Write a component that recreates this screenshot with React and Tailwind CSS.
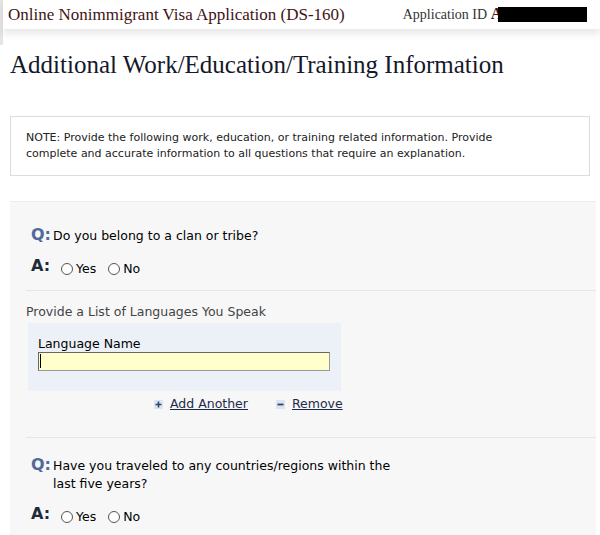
import React from 'react';

function Radio({ label }) {
    return (
        <span className="flex items-center mr-[12px]">
            <span className="w-[12px] h-[12px] rounded-full border border-[#555] bg-white mr-[3px]"></span>
            <span>{label}</span>
        </span>
    );
}

function Answer() {
    return (
        <div className="flex items-start">
            <span className="w-[30px] font-bold text-[16px] text-[#1f2a3a] leading-[18px]">A:</span>
            <div className="flex items-center mt-[3px] text-[12.5px] text-black">
                <Radio label="Yes" />
                <Radio label="No" />
            </div>
        </div>
    );
}

function Question({ children }) {
    return (
        <div className="flex items-start">
            <span className="w-[22px] font-bold text-[16px] text-[#4f6b99] leading-[18px]">Q:</span>
            <div className="text-[12.5px] text-black leading-[18px] mt-[1px]">{children}</div>
        </div>
    );
}

export default function App() {
    return (
        <div className="w-[600px] h-[535px] overflow-hidden bg-white font-['DejaVu_Sans',Verdana,sans-serif]">
            <div className="border-l-[3px] border-[#e4e4e4] h-[45px]">
                <div className="flex items-center h-[29px] pl-[5px] pr-[15px] shadow-[0_5px_7px_rgba(0,0,0,0.09)] font-['Liberation_Serif',serif] whitespace-nowrap">
                    <span className="shrink-0 text-[17px] text-[#3f1414] leading-[22px]">Online Nonimmigrant Visa Application (DS-160)</span>
                    <span className="shrink-0 ml-[58px] text-[14px] text-[#333] leading-[20px]">Application ID <b className="text-[#4a1414] text-[16px]">A</b></span>
                    <span className="shrink-0 -ml-[4px] w-[89px] h-[15px] bg-black"></span>
                </div>
            </div>
            <h1 className="ml-[10px] mt-[4px] font-['Liberation_Serif',serif] text-[25px] leading-[32px] text-[#14182a] whitespace-nowrap">Additional Work/Education/Training Information</h1>

            <div className="mx-[10px] mt-[35px] border border-[#dcdcdc] px-[15px] pt-[13px] pb-[13px] text-[11px] leading-[16px] text-[#222]">
                <div className="max-w-[475px]">
                    NOTE: Provide the following work, education, or training related information. Provide complete and accurate information to all questions that require an explanation.
                </div>
            </div>

            <div className="ml-[10px] mr-[4px] mt-[25px] bg-[#f7f7f7] border-t border-[#ececec] pl-[21px] pt-[24px] pb-[20px]">
                <Question>Do you belong to a clan or tribe?</Question>
                <div className="mt-[12px]"><Answer /></div>
                <div className="border-t border-[#e6e6e6] mt-[11px] -ml-[5px]"></div>
                <div className="-ml-[5px] mt-[13px] text-[12.5px] text-[#444] leading-[16px]">Provide a List of Languages You Speak</div>
                <div className="-ml-[3px] mt-[3px] w-[313px] bg-[#ebf1f7] pl-[10px] pr-[10px] pt-[13px] pb-[20px]">
                    <div className="text-[12.5px] text-black leading-[16px]">Language Name</div>
                    <div className="h-[19px] w-[292px] bg-[#ffffcc] border border-[#999] border-t-[#666] border-l-[#666] flex items-center pl-[1px]">
                        <span className="w-[1px] h-[14px] bg-black"></span>
                    </div>
                </div>
                <div className="flex items-center mt-[4px] ml-[123px] text-[12.5px] text-[#1d2b4a]">
                    <svg width="9" height="9" viewBox="0 0 9 9" className="mr-[7px]">
                        <rect x="0" y="0" width="9" height="9" fill="#dde4ee" />
                        <path d="M4.5 1.5v6M1.5 4.5h6" stroke="#2c4470" strokeWidth="1.6" />
                    </svg>
                    <span className="underline">Add Another</span>
                    <svg width="9" height="9" viewBox="0 0 9 9" className="ml-[28px] mr-[7px]">
                        <rect x="0" y="0" width="9" height="9" fill="#dde4ee" />
                        <path d="M1.5 4.5h6" stroke="#2c4470" strokeWidth="1.8" />
                    </svg>
                    <span className="underline">Remove</span>
                </div>
                <div className="border-t border-[#e6e6e6] mt-[23px] -ml-[5px]"></div>
                <div className="mt-[18px]">
                    <Question>Have you traveled to any countries/regions within the<br />last five years?</Question>
                </div>
                <div className="mt-[12px]"><Answer /></div>
            </div>
        </div>
    );
}
